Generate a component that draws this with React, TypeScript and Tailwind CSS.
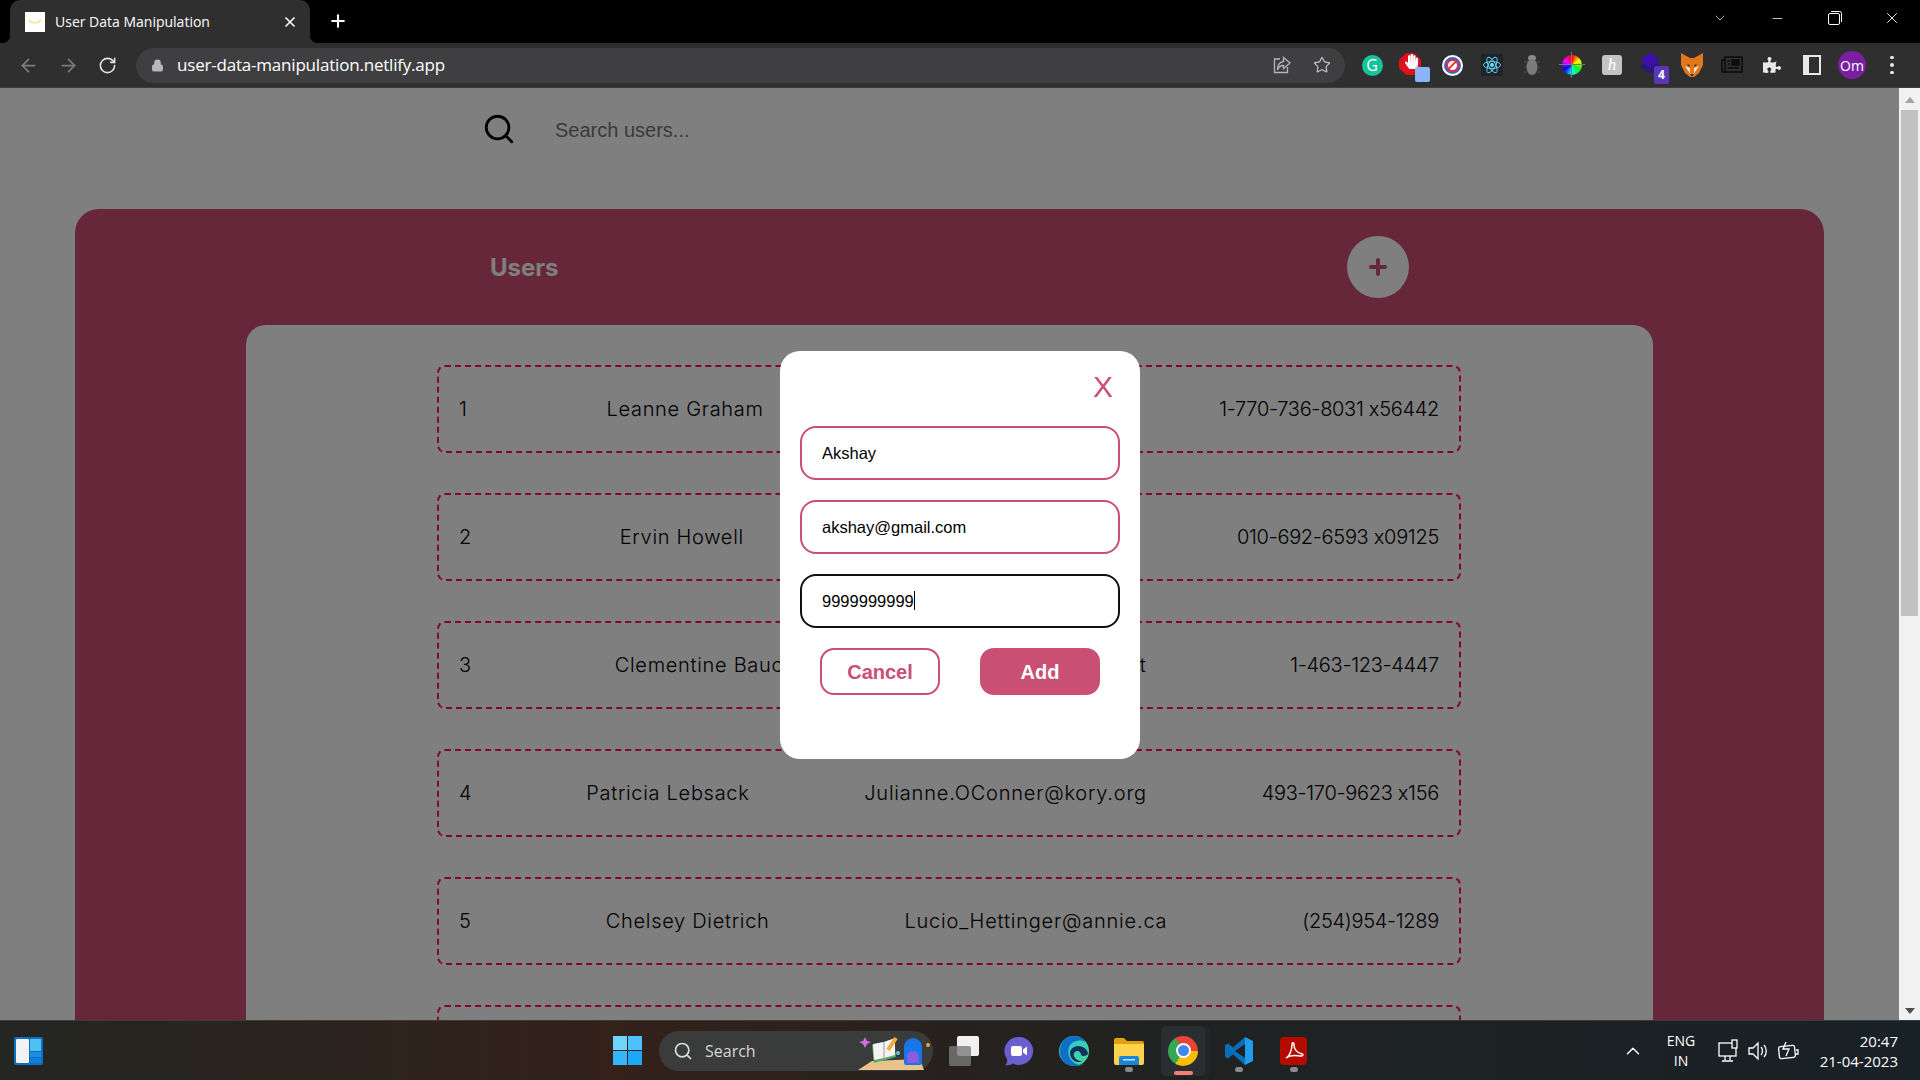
import React from 'react';
import { ArrowLeft, ArrowRight, ChevronDown, ChevronUp, Lock, Minus, Plus, RotateCw, Search, Star, X } from 'lucide-react';
import { FaHandPaper, FaPuzzlePiece } from 'react-icons/fa';

const users = [
  { id: 1, name: 'Leanne Graham', email: 'Sincere@april.biz', phone: '1-770-736-8031 x56442' },
  { id: 2, name: 'Ervin Howell', email: 'Shanna@melissa.tv', phone: '010-692-6593 x09125' },
  { id: 3, name: 'Clementine Bauch', email: 'Nathan@yesenia.net', phone: '1-463-123-4447' },
  { id: 4, name: 'Patricia Lebsack', email: 'Julianne.OConner@kory.org', phone: '493-170-9623 x156' },
  { id: 5, name: 'Chelsey Dietrich', email: 'Lucio_Hettinger@annie.ca', phone: '(254)954-1289' },
  { id: 6, name: 'Mrs. Dennis Schulist', email: 'Karley_Dach@jasper.info', phone: '1-477-935-8478 x6430' },
];

const ExtSlot = ({ children }: { children: React.ReactNode }) => (
  <div className="relative flex h-[40px] w-[40px] items-center justify-center">{children}</div>
);

const Extensions = () => (
  <div className="ml-[7px] flex items-center">
    <ExtSlot>
      <div className="flex h-[21px] w-[21px] items-center justify-center rounded-full bg-[#15c39a] text-[16px] text-white">G</div>
    </ExtSlot>
    <ExtSlot>
      <svg width="22" height="22" viewBox="0 0 22 22" className="mb-[3px] mr-[4px]">
        <polygon points="7,0 15,0 22,7 22,15 15,22 7,22 0,15 0,7" fill="#e0101c" />
      </svg>
      <FaHandPaper className="absolute left-[12px] top-[9px] text-[15px] text-white" />
      <div className="absolute bottom-[3px] right-[2px] h-[15px] w-[15px] rounded-[2px] bg-[#8ab4f8]" />
    </ExtSlot>
    <ExtSlot>
      <div className="flex h-[21px] w-[21px] items-center justify-center rounded-full border-[2px] border-white bg-[#3f63c9]">
        <div className="relative h-[13px] w-[13px] rounded-full border-[2px] border-[#e0313c] bg-white">
          <div className="absolute left-[-1px] top-[3px] h-[2px] w-[11px] -rotate-45 bg-[#e0313c]" />
        </div>
      </div>
    </ExtSlot>
    <ExtSlot>
      <div className="flex h-[22px] w-[22px] items-center justify-center bg-[#20232a]">
        <svg width="20" height="20" viewBox="-11 -11 22 22" fill="none" stroke="#61dafb" strokeWidth="1">
          <ellipse rx="9.5" ry="3.8" />
          <ellipse rx="9.5" ry="3.8" transform="rotate(60)" />
          <ellipse rx="9.5" ry="3.8" transform="rotate(120)" />
          <circle r="1.8" fill="#61dafb" />
        </svg>
      </div>
    </ExtSlot>
    <ExtSlot>
      <svg width="18" height="24" viewBox="0 0 18 24" fill="none" stroke="#555" strokeWidth="1">
        <ellipse cx="9" cy="5" rx="4" ry="3" fill="#8a8a8a" stroke="none" />
        <ellipse cx="9" cy="14" rx="5.5" ry="8" fill="#7b7b7b" stroke="none" />
        <path d="M1 9h3M1 14h3M1 19h3M14 9h3M14 14h3M14 19h3" />
      </svg>
    </ExtSlot>
    <ExtSlot>
      <div className="relative h-[26px] w-[26px]">
        <div className="absolute left-[3px] top-[3px] h-[20px] w-[20px] rounded-full bg-[conic-gradient(#ff0000,#ffff00,#00ff00,#00ffff,#0000ff,#ff00ff,#ff0000)]" />
        <div className="absolute left-[12px] top-0 h-[26px] w-[1px] bg-[#777]" />
        <div className="absolute left-0 top-[12px] h-[1px] w-[26px] bg-[#777]" />
      </div>
    </ExtSlot>
    <ExtSlot>
      <div className="flex h-[20px] w-[20px] items-center justify-center rounded-[3px] bg-[#c4c4c4] font-['Liberation_Serif',serif] text-[17px] italic text-white">h</div>
    </ExtSlot>
    <ExtSlot>
      <svg width="20" height="24" viewBox="0 0 20 24" className="mb-[2px] mr-[4px]">
        <polygon points="10,6 20,14 10,22 0,14" fill="#2a1480" />
        <polygon points="10,0 20,8 10,16 0,8" fill="#3c10a8" />
      </svg>
      <div className="absolute bottom-[1px] right-[3px] flex h-[18px] w-[15px] items-center justify-center rounded-[2px] bg-[#5b37b7] text-[12px] font-bold text-white">4</div>
    </ExtSlot>
    <ExtSlot>
      <svg width="22" height="24" viewBox="0 0 22 24">
        <polygon points="0,0 9,5 13,5 22,0 22,12 18,20 13,24 9,24 4,20 0,12" fill="#e2761b" />
        <polygon points="4,13 9,15 9,20 11,22 13,20 13,15 18,13 14,19 11,24 8,19" fill="#f6e3cf" />
        <polygon points="6,11 9,12 8,14" fill="#233447" />
        <polygon points="16,11 13,12 14,14" fill="#233447" />
        <polygon points="9,21 13,21 11,24" fill="#233447" />
      </svg>
    </ExtSlot>
    <ExtSlot>
      <svg width="22" height="18" viewBox="0 0 22 18" fill="none" stroke="#0d0d0d" strokeWidth="1.6">
        <rect x="4" y="1" width="17" height="15" />
        <path d="M4 16H2a1 1 0 0 1-1-1V4h3" />
        <rect x="11" y="4" width="7" height="5" fill="#0d0d0d" />
        <path d="M6.5 5h2.5M6.5 8h2.5M6.5 12h11.5" />
      </svg>
    </ExtSlot>
    <ExtSlot>
      <FaPuzzlePiece className="text-[18px] text-[#e8e8e8]" />
    </ExtSlot>
    <ExtSlot>
      <div className="flex h-[20px] w-[18px] justify-end border-[2px] border-[#e8e8e8] bg-[#e8e8e8]">
        <div className="h-full w-[10px] bg-[#2f2f2f]" />
      </div>
    </ExtSlot>
    <ExtSlot>
      <div className="flex h-[28px] w-[28px] items-center justify-center rounded-full bg-[#7b1fa2] font-['Open_Sans',sans-serif] text-[14px] text-white">Om</div>
    </ExtSlot>
    <ExtSlot>
      <div className="flex flex-col gap-[4px]">
        <div className="h-[3.5px] w-[3.5px] rounded-full bg-[#e8e8e8]" />
        <div className="h-[3.5px] w-[3.5px] rounded-full bg-[#e8e8e8]" />
        <div className="h-[3.5px] w-[3.5px] rounded-full bg-[#e8e8e8]" />
      </div>
    </ExtSlot>
  </div>
);

const BrowserChrome = () => (
  <div className="shrink-0 font-['Open_Sans',sans-serif]">
    <div className="flex h-[43px] items-end bg-black pl-[10px]">
      <div className="relative flex h-[43px] w-[300px] items-center rounded-t-[10px] bg-[#2f2f2f] pl-[15px] pr-[12px]">
        <div className="absolute bottom-0 left-[-8px] h-[8px] w-[8px] bg-[radial-gradient(circle_at_0_0,#000_8px,#2f2f2f_8.5px)]" />
        <div className="absolute bottom-0 right-[-8px] h-[8px] w-[8px] bg-[radial-gradient(circle_at_100%_0,#000_8px,#2f2f2f_8.5px)]" />
        <div className="flex h-[20px] w-[20px] items-center justify-center bg-white">
          <svg width="14" height="6" viewBox="0 0 14 6" fill="none" stroke="#f5d76e" strokeWidth="1.2">
            <path d="M1 1c3 4 9 4 12 0" />
          </svg>
        </div>
        <span className="ml-[10px] text-[14px] text-white">User Data Manipulation</span>
        <X className="ml-auto text-white" size={16} strokeWidth={2.5} />
      </div>
      <Plus className="mb-[12px] ml-[18px] text-white" size={20} strokeWidth={2.5} />
      <div className="ml-auto mb-[16px] flex items-center">
        <ChevronDown className="text-[#cfcfcf]" size={16} strokeWidth={1.2} />
        <Minus className="ml-[42px] text-white" size={15} strokeWidth={1.2} />
        <svg width="14" height="14" viewBox="0 0 14 14" fill="none" stroke="#fff" strokeWidth="1" className="ml-[43px]">
          <rect x="0.5" y="2.5" width="11" height="11" rx="1.5" />
          <path d="M3 0.5h8.5a2 2 0 0 1 2 2V11" />
        </svg>
        <X className="ml-[41px] mr-[19px] text-white" size={18} strokeWidth={1.2} />
      </div>
    </div>
    <div className="flex h-[45px] items-center border-b border-[#3c3c3c] bg-[#2f2f2f] pl-[18px]">
      <ArrowLeft className="text-[#7c7c7c]" size={21} />
      <ArrowRight className="ml-[19px] text-[#7c7c7c]" size={21} />
      <RotateCw className="ml-[19px] text-[#e3e3e3]" size={19} />
      <div className="ml-[19px] flex h-[35px] w-[1209px] items-center rounded-full bg-[#3f3f41] pl-[15px] pr-[14px]">
        <Lock className="text-[#b8b8bb]" size={13} fill="#b8b8bb" />
        <span className="ml-[13px] text-[17px] tracking-[-0.2px] text-white">user-data-manipulation.netlify.app</span>
        <svg width="20" height="20" viewBox="0 0 20 20" fill="none" stroke="#b5b5b5" strokeWidth="1.3" className="ml-auto">
          <path d="M8 4H2.5v13.5h13V12" />
          <path d="M11.5 2.5 18 8l-6.5 5.5V10.5C8 10.5 6.5 12 5.5 15c0-5 2-8 6-8.5z" />
        </svg>
        <Star className="ml-[21px] text-[#c4c4c4]" size={18} strokeWidth={1.6} />
      </div>
      <Extensions />
    </div>
  </div>
);

const UserRow = ({ user }: { user: (typeof users)[number] }) => (
  <div className="flex h-[88px] shrink-0 items-center justify-between rounded-[8px] border-2 border-dashed border-[#fd1457] px-[20px] font-['Inter',sans-serif] text-[20px] font-light text-black">
    <span>{user.id}</span>
    <span className="tracking-[0.7px]">{user.name}</span>
    <span className="tracking-[0.8px]">{user.email}</span>
    <span className="tracking-[-0.3px]">{user.phone}</span>
  </div>
);

const AddUserModal = () => (
  <div className="absolute inset-0 flex items-center justify-center bg-black/50 pl-[21px] pt-[2px]">
    <div className="flex h-[408px] w-[360px] flex-col rounded-[20px] bg-white px-[20px] pt-[18px] font-['Liberation_Sans',sans-serif]">
      <div className="self-end pr-[7px] text-[30px] leading-[36px] text-[#c94f75]">X</div>
      <input readOnly value="Akshay" className="mt-[21px] h-[54px] w-[320px] rounded-[16px] border-2 border-[#c94f75] px-[20px] text-[16.5px] text-black outline-none" />
      <input readOnly value="akshay@gmail.com" className="mt-[20px] h-[54px] w-[320px] rounded-[16px] border-2 border-[#c94f75] px-[20px] text-[16.5px] text-black outline-none" />
      <div className="relative mt-[20px]">
        <input readOnly value="9999999999" className="h-[54px] w-[320px] rounded-[16px] border-2 border-[#111] px-[20px] text-[16.5px] text-black outline-none" />
        <div className="absolute left-[114px] top-[17px] h-[19px] w-[1px] bg-black" />
      </div>
      <div className="mt-[20px] flex justify-between px-[20px]">
        <button className="h-[47px] w-[120px] rounded-[14px] border-2 border-[#c94f75] bg-white text-[20px] font-bold text-[#c94f75]">Cancel</button>
        <button className="h-[47px] w-[120px] rounded-[14px] bg-[#c94f75] text-[20px] font-bold text-white">Add</button>
      </div>
    </div>
  </div>
);

const Page = () => (
  <div className="relative min-w-0 flex-1 overflow-hidden bg-white">
    <div className="flex h-[121px] items-start pl-[482px] pt-[18px]">
      <div className="flex h-[46px] items-center">
        <Search className="text-black" size={34} strokeWidth={2} />
        <input
          readOnly
          placeholder="Search users..."
          className="ml-[39px] mt-[2px] w-[400px] bg-transparent font-['Liberation_Sans',sans-serif] text-[20px] outline-none placeholder:text-[#757575]"
        />
      </div>
    </div>
    <div className="ml-[75px] w-[1749px] rounded-[24px] bg-[#ca4e73]">
      <div className="flex h-[116px] items-center justify-between px-[415px]">
        <h1 className="mt-[2px] font-['Inter',sans-serif] text-[24px] font-bold text-white">Users</h1>
        <div className="mt-[-1px] flex h-[62px] w-[62px] items-center justify-center rounded-full bg-white">
          <Plus className="text-[#ca4e73]" size={24} strokeWidth={4} />
        </div>
      </div>
      <div className="mx-[171px] flex flex-col gap-[40px] rounded-[20px] bg-white pb-[40px] pl-[191px] pr-[192px] pt-[40px]">
        {users.map((user) => (
          <UserRow key={user.id} user={user} />
        ))}
      </div>
    </div>
    <AddUserModal />
  </div>
);

const Scrollbar = () => (
  <div className="flex w-[21px] shrink-0 flex-col items-center bg-[#f1f1f1] pt-[9px] pb-[6px]">
    <div className="h-0 w-0 border-x-[5px] border-b-[6px] border-x-transparent border-b-[#a3a3a3]" />
    <div className="mt-[7px] h-[506px] w-[17px] bg-[#c1c1c1]" />
    <div className="mt-auto h-0 w-0 border-x-[5px] border-t-[6px] border-x-transparent border-t-[#505050]" />
  </div>
);

const TaskbarApps = () => (
  <div className="flex items-center">
    {/* task view */}
    <div className="relative ml-[16px] h-[30px] w-[30px]">
      <div className="absolute right-0 top-0 h-[20px] w-[22px] rounded-[2px] bg-[#f0f0f0]" />
      <div className="absolute bottom-0 left-0 h-[20px] w-[22px] rounded-[2px] bg-[#7a7a7a]/80" />
    </div>
    {/* chat */}
    <svg width="30" height="30" viewBox="0 0 30 30" className="ml-[25px]">
      <path d="M15 1a14 14 0 1 1-6 26.6C7 29 4 29.500 1 29c2-1.500 2.500-3.500 2-6A14 14 0 0 1 15 1z" fill="#6a5fd1" />
      <rect x="7" y="10" width="11" height="10" rx="2" fill="#fff" />
      <polygon points="19,13.500 23,10.500 23,19.500 19,16.500" fill="#fff" />
    </svg>
    {/* edge */}
    <svg width="30" height="30" viewBox="0 0 30 30" className="ml-[25px]">
      <defs>
        <linearGradient id="edgeA" x1="0" y1="0" x2="1" y2="1">
          <stop offset="0" stopColor="#2cc3e8" />
          <stop offset="1" stopColor="#48d68c" />
        </linearGradient>
      </defs>
      <circle cx="15" cy="15" r="15" fill="url(#edgeA)" />
      <path d="M1 13C2 5 8 0 15 0c5 0 9 2 12 6-5-3-14-2-17 5-2 5 0 14 7 17 3 1 6 1 9-1-3 3-7 3-11 3C6 30 0 23 1 13z" fill="#0f6fc6" />
      <path d="M11 17c0-4 4-7 8-7 5 0 9 3 10 7 0 2-2 3-5 3-3 0-1-4-5-5-3 0-5 2-4 5 1 3 4 5 8 5-1 1-3 1-5 1-4-1-7-5-7-9z" fill="#14315c" />
    </svg>
    {/* file explorer */}
    <svg width="30" height="28" viewBox="0 0 30 28" className="ml-[25px]">
      <path d="M0 3a2 2 0 0 1 2-2h8l3 3h15a2 2 0 0 1 2 2v4H0z" fill="#e3a008" />
      <path d="M0 7h30v19a2 2 0 0 1-2 2H2a2 2 0 0 1-2-2z" fill="#fdd34d" />
      <path d="M5 21a2 2 0 0 1 2-2h16a2 2 0 0 1 2 2v7H5z" fill="#1a86d6" />
      <rect x="9" y="22" width="12" height="1.500" fill="#bfe3fb" />
    </svg>
    {/* chrome, running and focused */}
    <div className="relative ml-[17px] flex h-[50px] w-[44px] items-center justify-center rounded-[5px] bg-[#2a2e30]">
      <div className="absolute right-[-5px] top-0 h-[50px] w-[5px] rounded-r-[5px] bg-[#232628]" />
      <div className="flex h-[30px] w-[30px] items-center justify-center rounded-full bg-[conic-gradient(#ea4335_0deg,#ea4335_90deg,#fbbc04_90deg,#fbbc04_210deg,#34a853_210deg,#34a853_330deg,#ea4335_330deg)]">
        <div className="h-[15px] w-[15px] rounded-full border-[2.5px] border-white bg-[#4285f4]" />
      </div>
      <div className="absolute bottom-[1px] left-[13px] h-[4px] w-[19px] rounded-full bg-[#f08070]" />
    </div>
    {/* vscode */}
    <svg width="30" height="30" viewBox="0 0 30 30" className="ml-[19px]">
      <path d="M21 1l8 4v20l-8 4z" fill="#1f9cf0" />
      <path d="M21 1v7l-10 7 10 7v7L9 18.500 4 22.500 1 21V9l3-1.500 5 4z" fill="#0a6fb8" />
    </svg>
    {/* acrobat */}
    <div className="ml-[26px] flex h-[28px] w-[27px] items-center justify-center rounded-[4px] bg-[#b30b00]">
      <svg width="20" height="20" viewBox="0 0 20 20" fill="none" stroke="#fff" strokeWidth="1.5">
        <path d="M2 17c3-1 6-8 6-13 0-3 2-3 2 0 0 4 3 8 8 9 1.500.5 1 2-1 2-4 0-10-2-15 2z" />
      </svg>
    </div>
  </div>
);

const Taskbar = () => (
  <div className="relative flex h-[60px] shrink-0 items-center border-t border-[#3a3a3a] bg-[linear-gradient(90deg,#242622_0%,#33211a_32%,#202221_60%,#182126_100%)] font-['Open_Sans',sans-serif] text-white">
    <div className="ml-[14px] flex h-[28px] w-[29px] gap-[1px] rounded-[2px] bg-[#0c6fc4] p-[2px]">
      <div className="w-[13px] rounded-[1px] bg-[#f2f2f2]" />
      <div className="flex flex-1 flex-col gap-[1px]">
        <div className="flex-1 bg-[#4fc0f2]" />
        <div className="h-[5px] bg-[#1a8fe3]" />
        <div className="h-[5px] bg-[#0f7fd8]" />
      </div>
    </div>
    <div className="ml-[570px] grid h-[29px] w-[29px] grid-cols-2 gap-[1px]">
      <div className="bg-[#6fd3fb]" />
      <div className="bg-[#4cc2fa]" />
      <div className="bg-[#33b5f7]" />
      <div className="bg-[#1ca8f5]" />
    </div>
    <div className="relative ml-[17px] flex h-[40px] w-[274px] items-center rounded-full bg-[#3a3c3b] pl-[14px]">
      <Search className="text-[#dcdcdc]" size={20} strokeWidth={2} />
      <span className="ml-[12px] text-[16px] text-[#d6d6d6]">Search</span>
      <svg width="74" height="38" viewBox="0 0 74 38" className="absolute right-[1px] top-[2px]">
        <polygon points="0,37 14,28 62,26 66,37" fill="#e9c48a" />
        <polygon points="14,12 36,6 38,24 16,30" fill="#5ba86a" />
        <polygon points="15,11 26,9 37,5 37,22 26,25 16,27" fill="#f4f4f4" />
        <path d="M26 9v16" stroke="#9a9a9a" />
        <path d="M30 17 L38 5" stroke="#f4a93c" strokeWidth="4" />
        <polygon points="7,4 9,8 13,9 9,11 7,15 5,11 1,9 5,8" fill="#d46be0" />
        <path d="M46 30V14a9 9 0 0 1 18 0v16a2 2 0 0 1-2 2H48a2 2 0 0 1-2-2z" fill="#1976e8" />
        <path d="M49 30v-6a6 6 0 0 1 12 0v6z" fill="#8a5ce0" />
        <circle cx="40" cy="20" r="2" fill="#62c6d6" />
        <circle cx="70" cy="12" r="2" fill="#f0a818" />
      </svg>
    </div>
    <TaskbarApps />
    <ChevronUp className="ml-[315px] text-white" size={22} strokeWidth={1.6} />
    <div className="ml-[19px] flex w-[36px] flex-col items-center text-[14px] leading-[20px]">
      <span>ENG</span>
      <span>IN</span>
    </div>
    <svg width="22" height="24" viewBox="0 0 22 24" fill="none" stroke="#fff" strokeWidth="1.300" className="ml-[19px]">
      <rect x="1" y="4" width="17" height="13" />
      <path d="M7 17v4M12 17v4M4 22h11" />
      <rect x="14" y="1" width="5" height="8" fill="#222" />
    </svg>
    <svg width="22" height="20" viewBox="0 0 22 20" fill="none" stroke="#fff" strokeWidth="1.300" className="ml-[8px]">
      <path d="M1 7h4l5-5v16l-5-5H1z" />
      <path d="M13 6c2 2 2 6 0 8M16 4c3 3 3 9 0 12" />
    </svg>
    <svg width="22" height="20" viewBox="0 0 22 20" fill="none" stroke="#fff" strokeWidth="1.300" className="ml-[7px]">
      <rect x="2" y="5" width="16" height="12" rx="2" transform="rotate(-6 10 11)" />
      <path d="M19 9h2v4h-2" />
      <path d="M9 1 6 8h6l-3 7" />
    </svg>
    <div className="ml-auto mr-[22px] flex flex-col items-end text-[15px] leading-[20px]">
      <span>20:47</span>
      <span>21-04-2023</span>
    </div>
    {/* running app dots */}
    <div className="absolute left-[1125px] top-[46px] h-[5px] w-[8px] rounded-full bg-[#8a8a8a]" />
    <div className="absolute left-[1235px] top-[46px] h-[5px] w-[8px] rounded-full bg-[#8a8a8a]" />
    <div className="absolute left-[1290px] top-[46px] h-[5px] w-[8px] rounded-full bg-[#8a8a8a]" />
  </div>
);

export default function App() {
  return (
    <div className="flex h-screen w-screen flex-col overflow-hidden">
      <BrowserChrome />
      <div className="flex min-h-0 flex-1">
        <Page />
        <Scrollbar />
      </div>
      <Taskbar />
    </div>
  );
}
